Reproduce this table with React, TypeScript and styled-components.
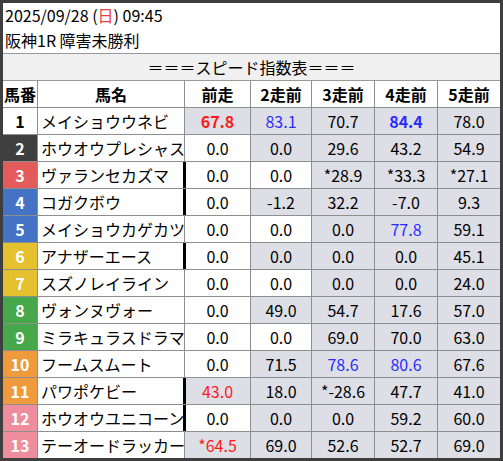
import styled, { createGlobalStyle } from 'styled-components';

type Cell = { v: string; color?: 'red' | 'blue'; bold?: boolean; white?: boolean };
type Row = { no: number; name: string; thick?: boolean; cells: Cell[] };

const W = (v: string): Cell => ({ v, white: true });
const G = (v: string): Cell => ({ v });

const rows: Row[] = [
  { no: 1, name: 'メイショウウネビ', cells: [{ v: '67.8', color: 'red', bold: true }, { v: '83.1', color: 'blue' }, G('70.7'), { v: '84.4', color: 'blue', bold: true }, G('78.0')] },
  { no: 2, name: 'ホウオウプレシャス', cells: [W('0.0'), G('0.0'), G('29.6'), G('43.2'), G('54.9')] },
  { no: 3, name: 'ヴァランセカズマ', thick: true, cells: [W('0.0'), W('0.0'), G('*28.9'), G('*33.3'), G('*27.1')] },
  { no: 4, name: 'コガクボウ', thick: true, cells: [W('0.0'), G('-1.2'), G('32.2'), G('-7.0'), G('9.3')] },
  { no: 5, name: 'メイショウカゲカツ', cells: [W('0.0'), W('0.0'), G('0.0'), { v: '77.8', color: 'blue' }, G('59.1')] },
  { no: 6, name: 'アナザーエース', thick: true, cells: [W('0.0'), G('0.0'), G('0.0'), G('0.0'), G('45.1')] },
  { no: 7, name: 'スズノレイライン', cells: [W('0.0'), W('0.0'), G('0.0'), G('0.0'), G('24.0')] },
  { no: 8, name: 'ヴォンヌヴォー', cells: [W('0.0'), G('49.0'), G('54.7'), G('17.6'), G('57.0')] },
  { no: 9, name: 'ミラキュラスドラマ', cells: [W('0.0'), W('0.0'), G('69.0'), G('70.0'), G('63.0')] },
  { no: 10, name: 'フームスムート', cells: [W('0.0'), G('71.5'), { v: '78.6', color: 'blue' }, { v: '80.6', color: 'blue' }, G('67.6')] },
  { no: 11, name: 'パワポケビー', thick: true, cells: [{ v: '43.0', color: 'red' }, G('18.0'), G('*-28.6'), G('47.7'), G('41.0')] },
  { no: 12, name: 'ホウオウユニコーン', thick: true, cells: [W('0.0'), G('0.0'), G('0.0'), G('59.2'), G('60.0')] },
  { no: 13, name: 'テーオードラッカー', cells: [{ v: '*64.5', color: 'red' }, G('69.0'), G('52.6'), G('52.7'), G('69.0')] },
];

// 枠色
const waku: Record<number, [string, string]> = {
  1: ['#ffffff', '#000000'],
  2: ['#3f3f3f', '#ffffff'],
  3: ['#e35b5b', '#ffffff'],
  4: ['#4472c4', '#ffffff'],
  5: ['#4472c4', '#ffffff'],
  6: ['#e6c12f', '#ffffff'],
  7: ['#e6c12f', '#ffffff'],
  8: ['#47a84b', '#ffffff'],
  9: ['#47a84b', '#ffffff'],
  10: ['#f09a3e', '#ffffff'],
  11: ['#f09a3e', '#ffffff'],
  12: ['#ee8d9d', '#ffffff'],
  13: ['#ee8d9d', '#ffffff'],
};

const heads = ['前走', '2走前', '3走前', '4走前', '5走前'];

const GlobalStyle = createGlobalStyle`
  html, body { margin: 0; padding: 0; background: #fff; }
  body { font-family: "Noto Sans CJK JP", "Noto Sans", sans-serif; }
`;

const Frame = styled.div`
  width: 503px;
  height: 461px;
  box-sizing: border-box;
  border: 3px solid #3e3e3e;
  display: flex;
  flex-direction: column;
  background: #fff;
  color: #000;
  font-size: 16px;
`;

const Info = styled.div`
  height: 50px;
  padding-left: 2px;
  display: flex;
  flex-direction: column;
  justify-content: center;
  line-height: 25px;
  border-bottom: 1px solid #999;
`;

const Sun = styled.span`
  color: #e84040;
`;

const Title = styled.div`
  height: 26px;
  line-height: 26px;
  text-align: center;
  background: #f0f0f0;
  border-bottom: 1px solid #999;
`;

const Table = styled.div`
  flex: 1;
  display: grid;
  grid-template-columns: 34px 146px 65px 60px 62px 62px 62px;
  grid-template-rows: 26px repeat(13, 1fr);
  gap: 1px;
  background: #8e8e8e;
`;

const Head = styled.div`
  background: #fff;
  font-weight: bold;
  display: flex;
  align-items: center;
  justify-content: center;
`;

const No = styled.div<{ $bg: string; $fg: string }>`
  background: ${({ $bg }) => $bg};
  color: ${({ $fg }) => $fg};
  font-weight: bold;
  display: flex;
  align-items: center;
  justify-content: center;
`;

const Name = styled.div`
  background: #fff;
  padding-left: 3px;
  display: flex;
  align-items: center;
  white-space: nowrap;
  overflow: hidden;
`;

const Val = styled.div<{ $white?: boolean; $color?: string; $bold?: boolean; $thick?: boolean }>`
  background: ${({ $white }) => ($white ? '#ffffff' : '#dedfe6')};
  color: ${({ $color }) => ($color === 'red' ? '#ff1a1a' : $color === 'blue' ? '#2b2bff' : '#000')};
  font-weight: ${({ $bold }) => ($bold ? 'bold' : 'normal')};
  display: flex;
  align-items: center;
  justify-content: center;
  box-shadow: ${({ $thick }) => ($thick ? '-2px 0 0 #000, inset 1px 0 0 #000' : 'none')};
`;

export default function App() {
  return (
    <>
      <GlobalStyle />
      <Frame>
        <Info>
          <div>
            2025/09/28 (<Sun>日</Sun>) 09:45
          </div>
          <div>阪神1R 障害未勝利</div>
        </Info>
        <Title>＝＝＝スピード指数表＝＝＝</Title>
        <Table>
          <Head>馬番</Head>
          <Head>馬名</Head>
          {heads.map((h) => (
            <Head key={h}>{h}</Head>
          ))}
          {rows.map((r) => (
            <Rowset key={r.no} row={r} />
          ))}
        </Table>
      </Frame>
    </>
  );
}

function Rowset({ row }: { row: Row }) {
  const [bg, fg] = waku[row.no];
  return (
    <>
      <No $bg={bg} $fg={fg}>{row.no}</No>
      <Name>{row.name}</Name>
      {row.cells.map((c, i) => (
        <Val key={i} $white={c.white} $color={c.color} $bold={c.bold} $thick={i === 0 && row.thick}>
          {c.v}
        </Val>
      ))}
    </>
  );
}
